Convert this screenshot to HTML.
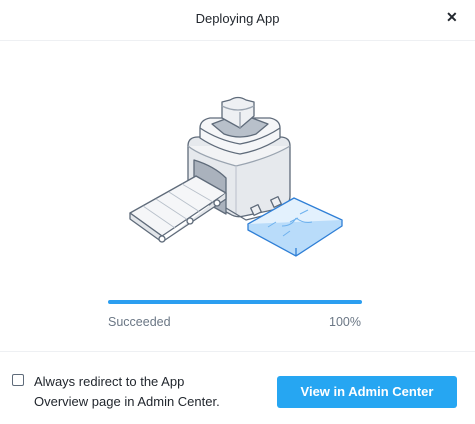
<!DOCTYPE html>
<html><head><style>
*{margin:0;padding:0;box-sizing:border-box}
body{width:475px;height:424px;background:#fff;font-family:"Liberation Sans",sans-serif;position:relative;overflow:hidden;color:#22272e}
.t{position:absolute;top:11px;left:0;width:475px;text-align:center;font-size:13px;color:#22272e}
.x{position:absolute;left:446px;top:9px;font-size:14px;font-weight:bold}
.hr{position:absolute;left:0;width:475px;height:1px;background:#eef0f3}
.bar{position:absolute;left:108px;top:300px;width:254px;height:4px;border-radius:2px;background:#2b9ef0}
.lab{position:absolute;top:315px;font-size:12.5px;color:#6b7785}
.cb{position:absolute;left:12px;top:374px;width:12px;height:12px;border:1.5px solid #5f6b7a;border-radius:2px}
.ct{position:absolute;left:34px;top:372px;font-size:13px;line-height:20px;color:#22272e}
.btn{position:absolute;left:277px;top:376px;width:180px;height:32px;background:#26a6f2;border-radius:3px;color:#fff;font-weight:bold;font-size:13px;text-align:center;line-height:32px}
</style></head><body>
<div class="t">Deploying App</div>
<div class="x">✕</div>
<div class="hr" style="top:40px"></div>
<svg style="position:absolute;left:0;top:0" width="475" height="300" fill="none" stroke="#5f6b7a" stroke-width="1.3" stroke-linejoin="round">
<!-- machine body -->
<path d="M188 146 Q188 137 198 137 L280 137 Q290 137 290 146 L290 196 Q290 204 282 208 L244 216 Q236 218 230 214 L196 196 Q188 192 188 184 Z" fill="#e6e9ed"/>
<path d="M188 146 Q200 156 236 166 Q270 158 290 146" stroke="#9aa4b0" fill="#f2f3f5"/>
<path d="M236 166 L236 214" stroke="#c4cad2"/>
<path d="M194 160 L194 196 L226 214 L226 178 Q214 166 194 160 Z" fill="#aab2bd"/>
<path d="M226 208 L246 220 L270 214 L292 200" />
<!-- conveyor -->
<path d="M130 213 L196 176 L226 193 L162 236 Z" fill="#f5f6f8"/>
<path d="M130 213 L130 219 L162 242 L162 236 Z" fill="#e3e6ea"/>
<path d="M162 242 L226 199 L226 193" fill="#e3e6ea"/>
<path d="M143 206 L175 228 M156 199 L188 220 M169 192 L200 212 M182 184 L213 202" stroke="#b8c0ca" stroke-width="0.9"/>
<circle cx="162" cy="239" r="3" fill="#fff"/><circle cx="190" cy="221" r="3" fill="#fff"/><circle cx="217" cy="203" r="3" fill="#fff"/>
<!-- top tier -->
<path d="M200 128 Q200 120 210 118 L270 118 Q280 120 280 128 L280 138 Q262 150 240 154 Q218 150 200 138 Z" fill="#f5f6f8"/>
<path d="M200 128 Q218 140 240 144 Q262 140 280 128" />
<path d="M212 124 L228 118 L252 118 L268 124 L256 134 Q240 140 224 134 Z" fill="#b8c0ca"/>
<!-- puzzle -->
<path d="M222 102 L230 100 Q238 95 246 100 L254 102 L254 116 L240 128 L222 118 Z" fill="#eef0f3"/>
<path d="M222 106 Q238 114 254 106 M240 112 L240 128" stroke="#9aa4b0"/>
<!-- tablet -->
<g stroke="#2f7fd6">
<path d="M248 224 L294 198 L342 220 L296 248 Z" fill="#e3f1fd"/>
<path d="M248 224 L248 230 L296 256 L342 226 L342 220 M296 248 L296 256" fill="#b9dcfa"/>
<path d="M268 227 L276 222 M283 236 L290 231 M290 222 L298 218 M300 214 L308 210 M282 226 Q292 226 296 218 M296 218 Q304 224 312 222" stroke="#6fb2ee" stroke-width="1"/>
</g>
<g fill="#eef0f3"><rect x="252" y="206" width="8" height="8" transform="rotate(-25 256 210)"/><rect x="272" y="198" width="8" height="8" transform="rotate(-25 276 202)"/></g>
</svg>
<div class="bar"></div>
<div class="lab" style="left:108px">Succeeded</div>
<div class="lab" style="left:329px">100%</div>
<div class="hr" style="top:351px"></div>
<div class="cb"></div>
<div class="ct">Always redirect to the App<br>Overview page in Admin Center.</div>
<div class="btn">View in Admin Center</div>
</body></html>
